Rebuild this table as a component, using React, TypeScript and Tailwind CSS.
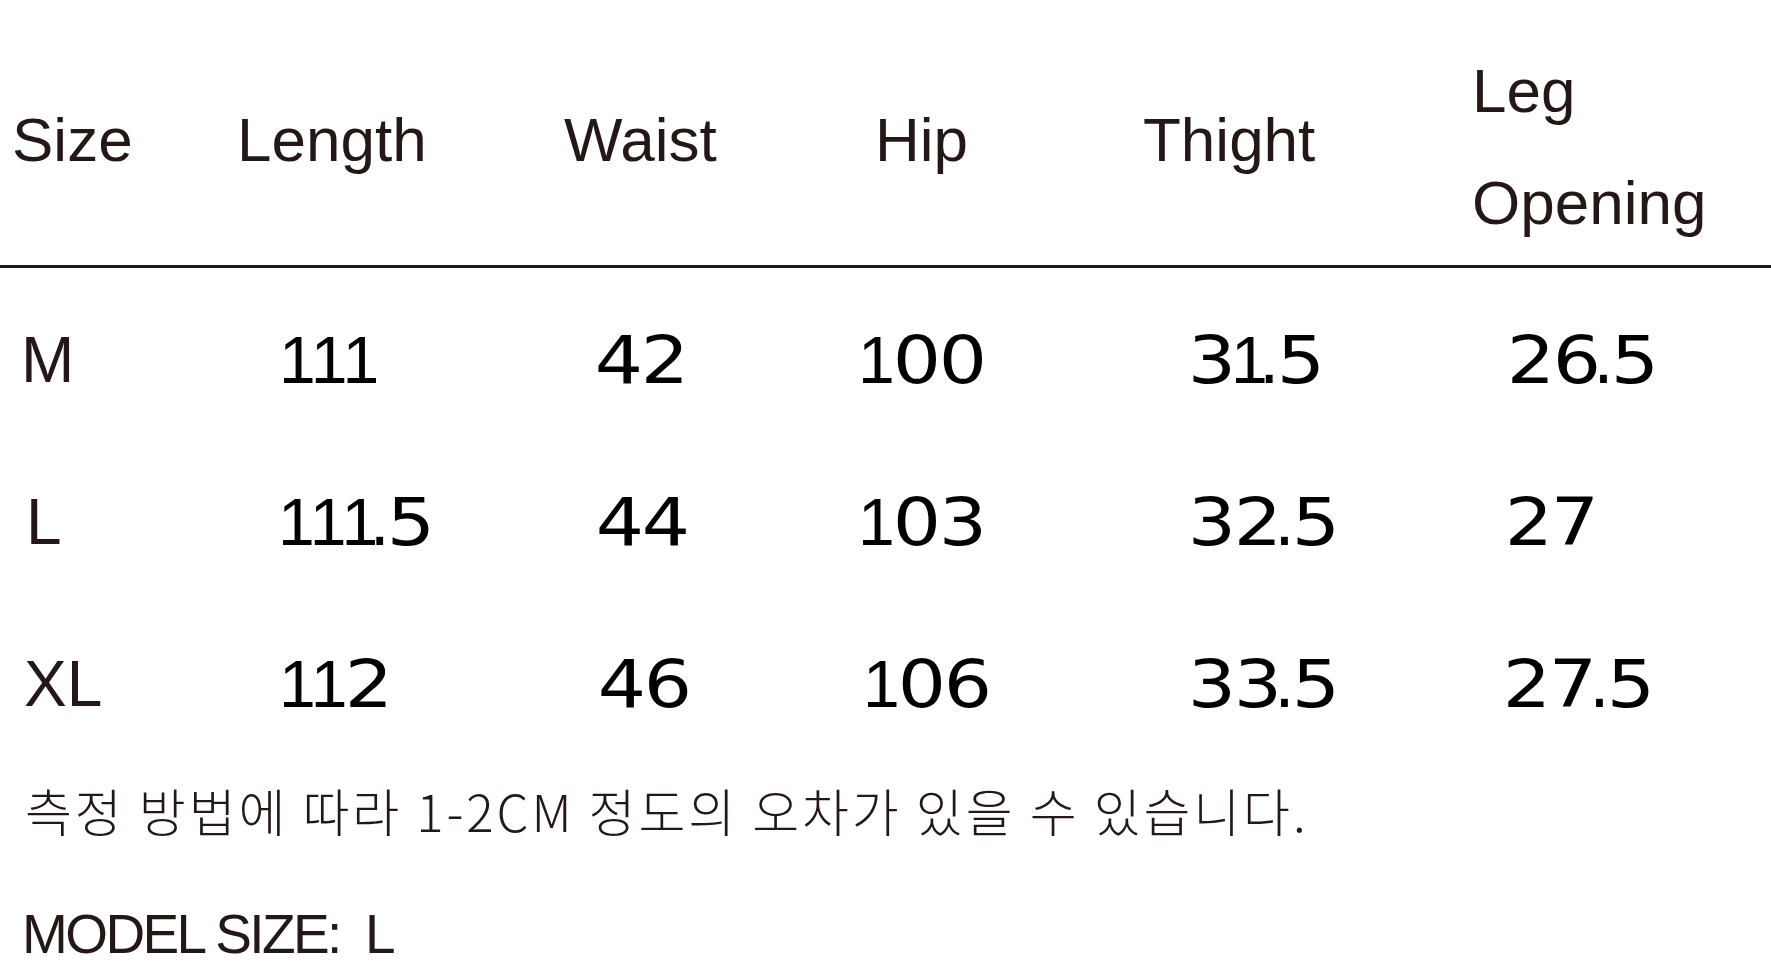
const sans = "font-['Liberation_Sans',Arial,sans-serif]";

type Cell = { text: string; pad: string };

const header: Cell[] = [
  { text: 'Size', pad: 'pl-[12px] pt-[81px]' },
  { text: 'Length', pad: 'pl-[17px] pt-[81px]' },
  { text: 'Waist', pad: 'pl-[24px] pt-[81px]' },
  { text: 'Hip', pad: 'pl-[55px] pt-[81px]' },
  { text: 'Thight', pad: 'pl-[33px] pt-[81px]' },
];

// first cell is the size label, the rest are measurements (cm)
const rows: Cell[][] = [
  [
    { text: 'M', pad: 'pl-[21px]' },
    { text: '111', pad: 'pl-[63px]' },
    { text: '42', pad: 'pl-[56px]' },
    { text: '100', pad: 'pl-[42px]' },
    { text: '31.5', pad: 'pl-[79px]' },
    { text: '26.5', pad: 'pl-[68px]' },
  ],
  [
    { text: 'L', pad: 'pl-[26px]' },
    { text: '111.5', pad: 'pl-[62px]' },
    { text: '44', pad: 'pl-[57px]' },
    { text: '103', pad: 'pl-[42px]' },
    { text: '32.5', pad: 'pl-[79px]' },
    { text: '27', pad: 'pl-[66px]' },
  ],
  [
    { text: 'XL', pad: 'pl-[24px]' },
    { text: '112', pad: 'pl-[63px]' },
    { text: '46', pad: 'pl-[59px]' },
    { text: '106', pad: 'pl-[47px]' },
    { text: '33.5', pad: 'pl-[79px]' },
    { text: '27.5', pad: 'pl-[64px]' },
  ],
];

const cols = 'grid grid-cols-[220px_320px_280px_290px_330px_1fr]';

// the chart's figures are set wide, with a narrow "1" and a tight "."
function Num({ value }: { value: string }) {
  const chars = value.split('');
  return (
    <span className="whitespace-nowrap">
      {chars.map((ch, i) => {
        if (ch === '1') {
          return (
            <span key={i} className="-ml-[4px] tracking-[-1px]">
              {ch}
            </span>
          );
        }
        if (ch === '.') {
          return (
            <span
              key={i}
              className={`${chars[i - 1] === '1' ? '-ml-[8px]' : '-ml-[7px]'} font-['DejaVu_Sans',sans-serif] tracking-[-2px]`}
            >
              {ch}
            </span>
          );
        }
        return (
          <span
            key={i}
            className="inline-block w-[46px] scale-x-[1.15] text-center font-['DejaVu_Sans',sans-serif]"
          >
            {ch}
          </span>
        );
      })}
    </span>
  );
}

export default function App() {
  return (
    <div className={`h-[980px] w-[1771px] overflow-hidden bg-white ${sans}`}>
      {/* header */}
      <div className={`${cols} h-[265px] text-[62px] leading-[118px] text-[#231815]`}>
        {header.map((h) => (
          <div key={h.text} className={h.pad}>
            {h.text}
          </div>
        ))}
        <div className="pl-[32px] pt-[35px] leading-[112px]">
          <div>Leg</div>
          <div>Opening</div>
        </div>
      </div>
      <div className="h-[3px] w-full bg-[#231815]" />

      {/* measurements */}
      <div className="mt-[11px]">
        {rows.map((row) => (
          <div key={row[0].text} className={`${cols} h-[162px] leading-[162px]`}>
            {row.map((c, i) =>
              i === 0 ? (
                <div key={i} className={`${c.pad} text-[64px] text-[#231815]`}>
                  {c.text}
                </div>
              ) : (
                <div key={i} className={`${c.pad} text-[66px] text-black`}>
                  <Num value={c.text} />
                </div>
              ),
            )}
          </div>
        ))}
      </div>

      {/* notes */}
      <p className="mt-[15px] pl-[25px] font-['Noto_Sans_CJK_KR',sans-serif] text-[51px] font-light leading-[60px] tracking-[2.9px] text-[#231815]">
        측정 방법에 따라 1-2CM 정도의 오차가 있을 수 있습니다.
      </p>
      <p className="mt-[64px] pl-[22px] text-[55px] leading-[60px] tracking-[-2.6px] text-[#231815]">
        MODEL SIZE:&nbsp; L
      </p>
    </div>
  );
}
